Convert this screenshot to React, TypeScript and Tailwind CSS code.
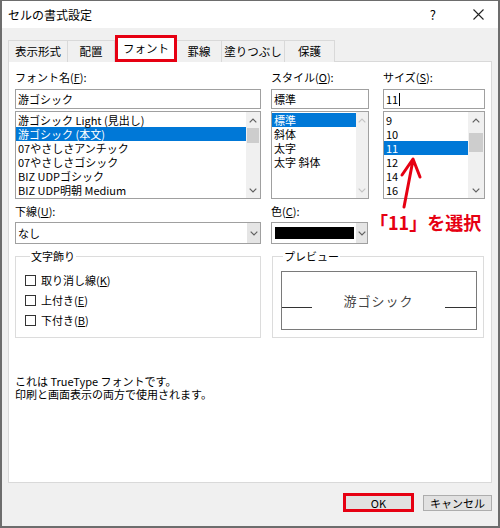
import type { ReactNode } from "react";

const fontItems = [
	"游ゴシック Light (見出し)",
	"游ゴシック (本文)",
	"07やさしさアンチック",
	"07やさしさゴシック",
	"BIZ UDPゴシック",
	"BIZ UDP明朝 Medium",
];
const styleItems = ["標準", "斜体", "太字", "太字 斜体"];
const sizeItems = ["9", "10", "11", "12", "14", "16"];

const tabs = [
	{ label: "表示形式", w: "w-[60px]" },
	{ label: "配置", w: "w-[47px]" },
	{ label: "フォント", w: "w-[62px]", active: true },
	{ label: "罫線", w: "w-[45px]" },
	{ label: "塗りつぶし", w: "w-[63px]" },
	{ label: "保護", w: "w-[50px]" },
];

function ChevUp({ color }: { color: string }) {
	return (
		<svg width="8" height="5" viewBox="0 0 8 5">
			<polyline points="0.7,4.3 4,1 7.3,4.3" fill="none" stroke={color} strokeWidth="1.2" />
		</svg>
	);
}

function ChevDown({ color }: { color: string }) {
	return (
		<svg width="8" height="5" viewBox="0 0 8 5">
			<polyline points="0.7,0.7 4,4 7.3,0.7" fill="none" stroke={color} strokeWidth="1.2" />
		</svg>
	);
}

function Items({ items, selected }: { items: string[]; selected: number }) {
	return (
		<div className="min-w-0 flex-1 overflow-hidden pt-px">
			{items.map((t, i) => (
				<div
					key={t}
					className={`h-[14px] whitespace-nowrap pl-[2px] leading-[14px] ${
						i === selected ? "bg-[#0078d7] text-white" : "text-black"
					}`}
				>
					{t}
				</div>
			))}
		</div>
	);
}

function Label({ children }: { children: ReactNode }) {
	return <div className="h-[14px] whitespace-nowrap leading-[14px] text-black">{children}</div>;
}

function CheckRow({ label, k }: { label: string; k: string }) {
	return (
		<div className="flex h-[20px] items-center">
			<div className="h-[11px] w-[11px] border border-[#333] bg-white" />
			<span className="ml-[5px] leading-[14px]">
				{label}(<u>{k}</u>)
			</span>
		</div>
	);
}

export default function App() {
	return (
		<div className="relative flex h-[528px] w-[500px] flex-col border-x-2 border-t border-b-2 border-[#6d6d6d] bg-[#f0f0f0] font-['Noto_Sans_CJK_JP','Noto_Sans',sans-serif] text-[11px] text-black">
			{/* title bar */}
			<div className="flex h-[27px] shrink-0 items-center bg-white pl-[6px] pr-[14px]">
				<span className="text-[12px] leading-[14px]">セルの書式設定</span>
				<span className="ml-auto text-[13px] leading-[14px]">?</span>
				<svg className="ml-[37px]" width="11" height="11" viewBox="0 0 11 11">
					<path d="M0.5 0.5 L10.5 10.5 M10.5 0.5 L0.5 10.5" stroke="#222" strokeWidth="1.1" />
				</svg>
			</div>

			{/* tabs */}
			<div className="relative z-10 mt-[7px] -mb-px flex h-[27px] items-end pl-[6px]">
				{tabs.map((t) =>
					t.active ? (
						<div
							key={t.label}
							className={`${t.w} flex h-[27px] items-center justify-center border-[3px] border-[#e60012] bg-white text-[11.5px]`}
						>
							{t.label}
						</div>
					) : (
						<div
							key={t.label}
							className={`${t.w} flex h-[22px] items-center justify-center border-t border-r border-[#d9d9d9] bg-[#f0f0f0] text-[11.5px] first:border-l`}
						>
							{t.label}
						</div>
					),
				)}
			</div>

			{/* panel */}
			<div className="mx-[6px] h-[422px] shrink-0 border border-[#d9d9d9] bg-white pl-[6px] pt-[8px]">
				{/* row 1 */}
				<div className="flex">
					<div className="w-[246px]">
						<Label>
							フォント名(<u>F</u>):
						</Label>
						<div className="mt-[5px] h-[20px] border border-[#a0a0a0] pl-[2px] leading-[18px]">游ゴシック</div>
						<div className="mt-[2px] flex h-[88px] border border-[#a0a0a0] bg-white">
							<Items items={fontItems} selected={1} />
							<div className="flex w-[14px] flex-col bg-[#f0f0f0]">
								<div className="flex h-[16px] items-center justify-center">
									<ChevUp color="#606060" />
								</div>
								<div className="flex-1">
									<div className="mx-[1px] h-[15px] bg-[#cdcdcd]" />
								</div>
								<div className="flex h-[16px] items-center justify-center">
									<ChevDown color="#606060" />
								</div>
							</div>
						</div>
					</div>

					<div className="ml-[10px] w-[98px]">
						<Label>
							スタイル(<u>O</u>):
						</Label>
						<div className="mt-[5px] h-[20px] border border-[#a0a0a0] pl-[2px] leading-[18px]">標準</div>
						<div className="mt-[2px] flex h-[88px] border border-[#a0a0a0] bg-white">
							<Items items={styleItems} selected={0} />
							<div className="flex w-[12px] flex-col bg-[#f0f0f0]">
								<div className="flex h-[16px] items-center justify-center">
									<ChevUp color="#c4c4c4" />
								</div>
								<div className="flex-1" />
								<div className="flex h-[16px] items-center justify-center">
									<ChevDown color="#c4c4c4" />
								</div>
							</div>
						</div>
					</div>

					<div className="ml-[14px] w-[102px]">
						<Label>
							サイズ(<u>S</u>):
						</Label>
						<div className="mt-[5px] flex h-[20px] items-center border border-[#a0a0a0] pl-[2px]">
							<span className="leading-[14px]">11</span>
							<span className="ml-px h-[13px] w-px bg-black" />
						</div>
						<div className="mt-[2px] flex h-[88px] border border-[#a0a0a0] bg-white">
							<Items items={sizeItems} selected={2} />
							<div className="flex w-[16px] flex-col bg-[#f0f0f0]">
								<div className="flex h-[16px] items-center justify-center">
									<ChevUp color="#606060" />
								</div>
								<div className="flex-1 pt-[5px]">
									<div className="mx-[1px] h-[19px] bg-[#cdcdcd]" />
								</div>
								<div className="flex h-[16px] items-center justify-center">
									<ChevDown color="#606060" />
								</div>
							</div>
						</div>
					</div>
				</div>

				{/* row 2 */}
				<div className="mt-[5px] flex">
					<div className="w-[246px]">
						<Label>
							下線(<u>U</u>):
						</Label>
						<div className="mt-[4px] flex h-[22px] border border-[#a0a0a0] bg-white">
							<div className="flex-1 pl-[2px] leading-[20px]">なし</div>
							<div className="flex w-[13px] items-center justify-center bg-[#e5e5e5]">
								<ChevDown color="#606060" />
							</div>
						</div>
					</div>
					<div className="ml-[10px] w-[97px]">
						<Label>
							色(<u>C</u>):
						</Label>
						<div className="mt-[4px] flex h-[22px] border border-[#a0a0a0] bg-white">
							<div className="flex-1 pl-[3px] pt-[4px]">
								<div className="h-[12px] w-[79px] bg-black" />
							</div>
							<div className="flex w-[11px] items-center justify-center bg-[#e5e5e5]">
								<ChevDown color="#606060" />
							</div>
						</div>
					</div>
				</div>

				{/* group boxes */}
				<div className="mt-[5px] flex">
					<fieldset className="h-[89px] w-[246px] border border-[#dcdcdc] pl-[9px]">
						<legend className="ml-[5px] px-px leading-[14px]">文字飾り</legend>
						<div className="pt-[7px]">
							<CheckRow label="取り消し線" k="K" />
							<CheckRow label="上付き" k="E" />
							<CheckRow label="下付き" k="B" />
						</div>
					</fieldset>
					<fieldset className="ml-[11px] h-[89px] w-[212px] border border-[#dcdcdc] pl-[8px]">
						<legend className="ml-[2px] px-px leading-[14px]">プレビュー</legend>
						<div className="mt-[8px] flex h-[59px] w-[196px] items-center border border-[#7a7a7a]">
							<div className="mt-[13px] h-px w-[30px] bg-[#333]" />
							<div className="flex-1 text-center text-[13px] leading-[16px] tracking-[1px] text-[#444]">
								游ゴシック
							</div>
							<div className="mt-[13px] h-px w-[31px] bg-[#333]" />
						</div>
					</fieldset>
				</div>

				{/* notes */}
				<div className="mt-[37px] leading-[13px]">
					<div>これは TrueType フォントです。</div>
					<div>印刷と画面表示の両方で使用されます。</div>
				</div>
			</div>

			{/* buttons */}
			<div className="mt-[10px] flex items-center justify-end gap-[9px] pr-[6px]">
				<div className="flex h-[19px] w-[71px] items-center justify-center border-[3px] border-[#e60012] bg-[#e1e1e1] leading-[12px]">
					OK
				</div>
				<div className="flex h-[16px] w-[69px] items-center justify-center border border-[#adadad] bg-[#e1e1e1] leading-[12px]">
					キャンセル
				</div>
			</div>

			{/* annotation */}
			<div className="absolute left-[368px] top-[209px] text-[18px] font-bold leading-[24px] text-[#e60012]">
				「11」を選択
			</div>
			<svg className="pointer-events-none absolute left-0 top-0" width="500" height="528" viewBox="0 0 500 528">
				<path
					d="M402 206 L411 159 M400 174 L411 158 L418 176"
					fill="none"
					stroke="#e60012"
					strokeWidth="3"
					strokeLinecap="round"
					strokeLinejoin="round"
				/>
			</svg>
		</div>
	);
}
